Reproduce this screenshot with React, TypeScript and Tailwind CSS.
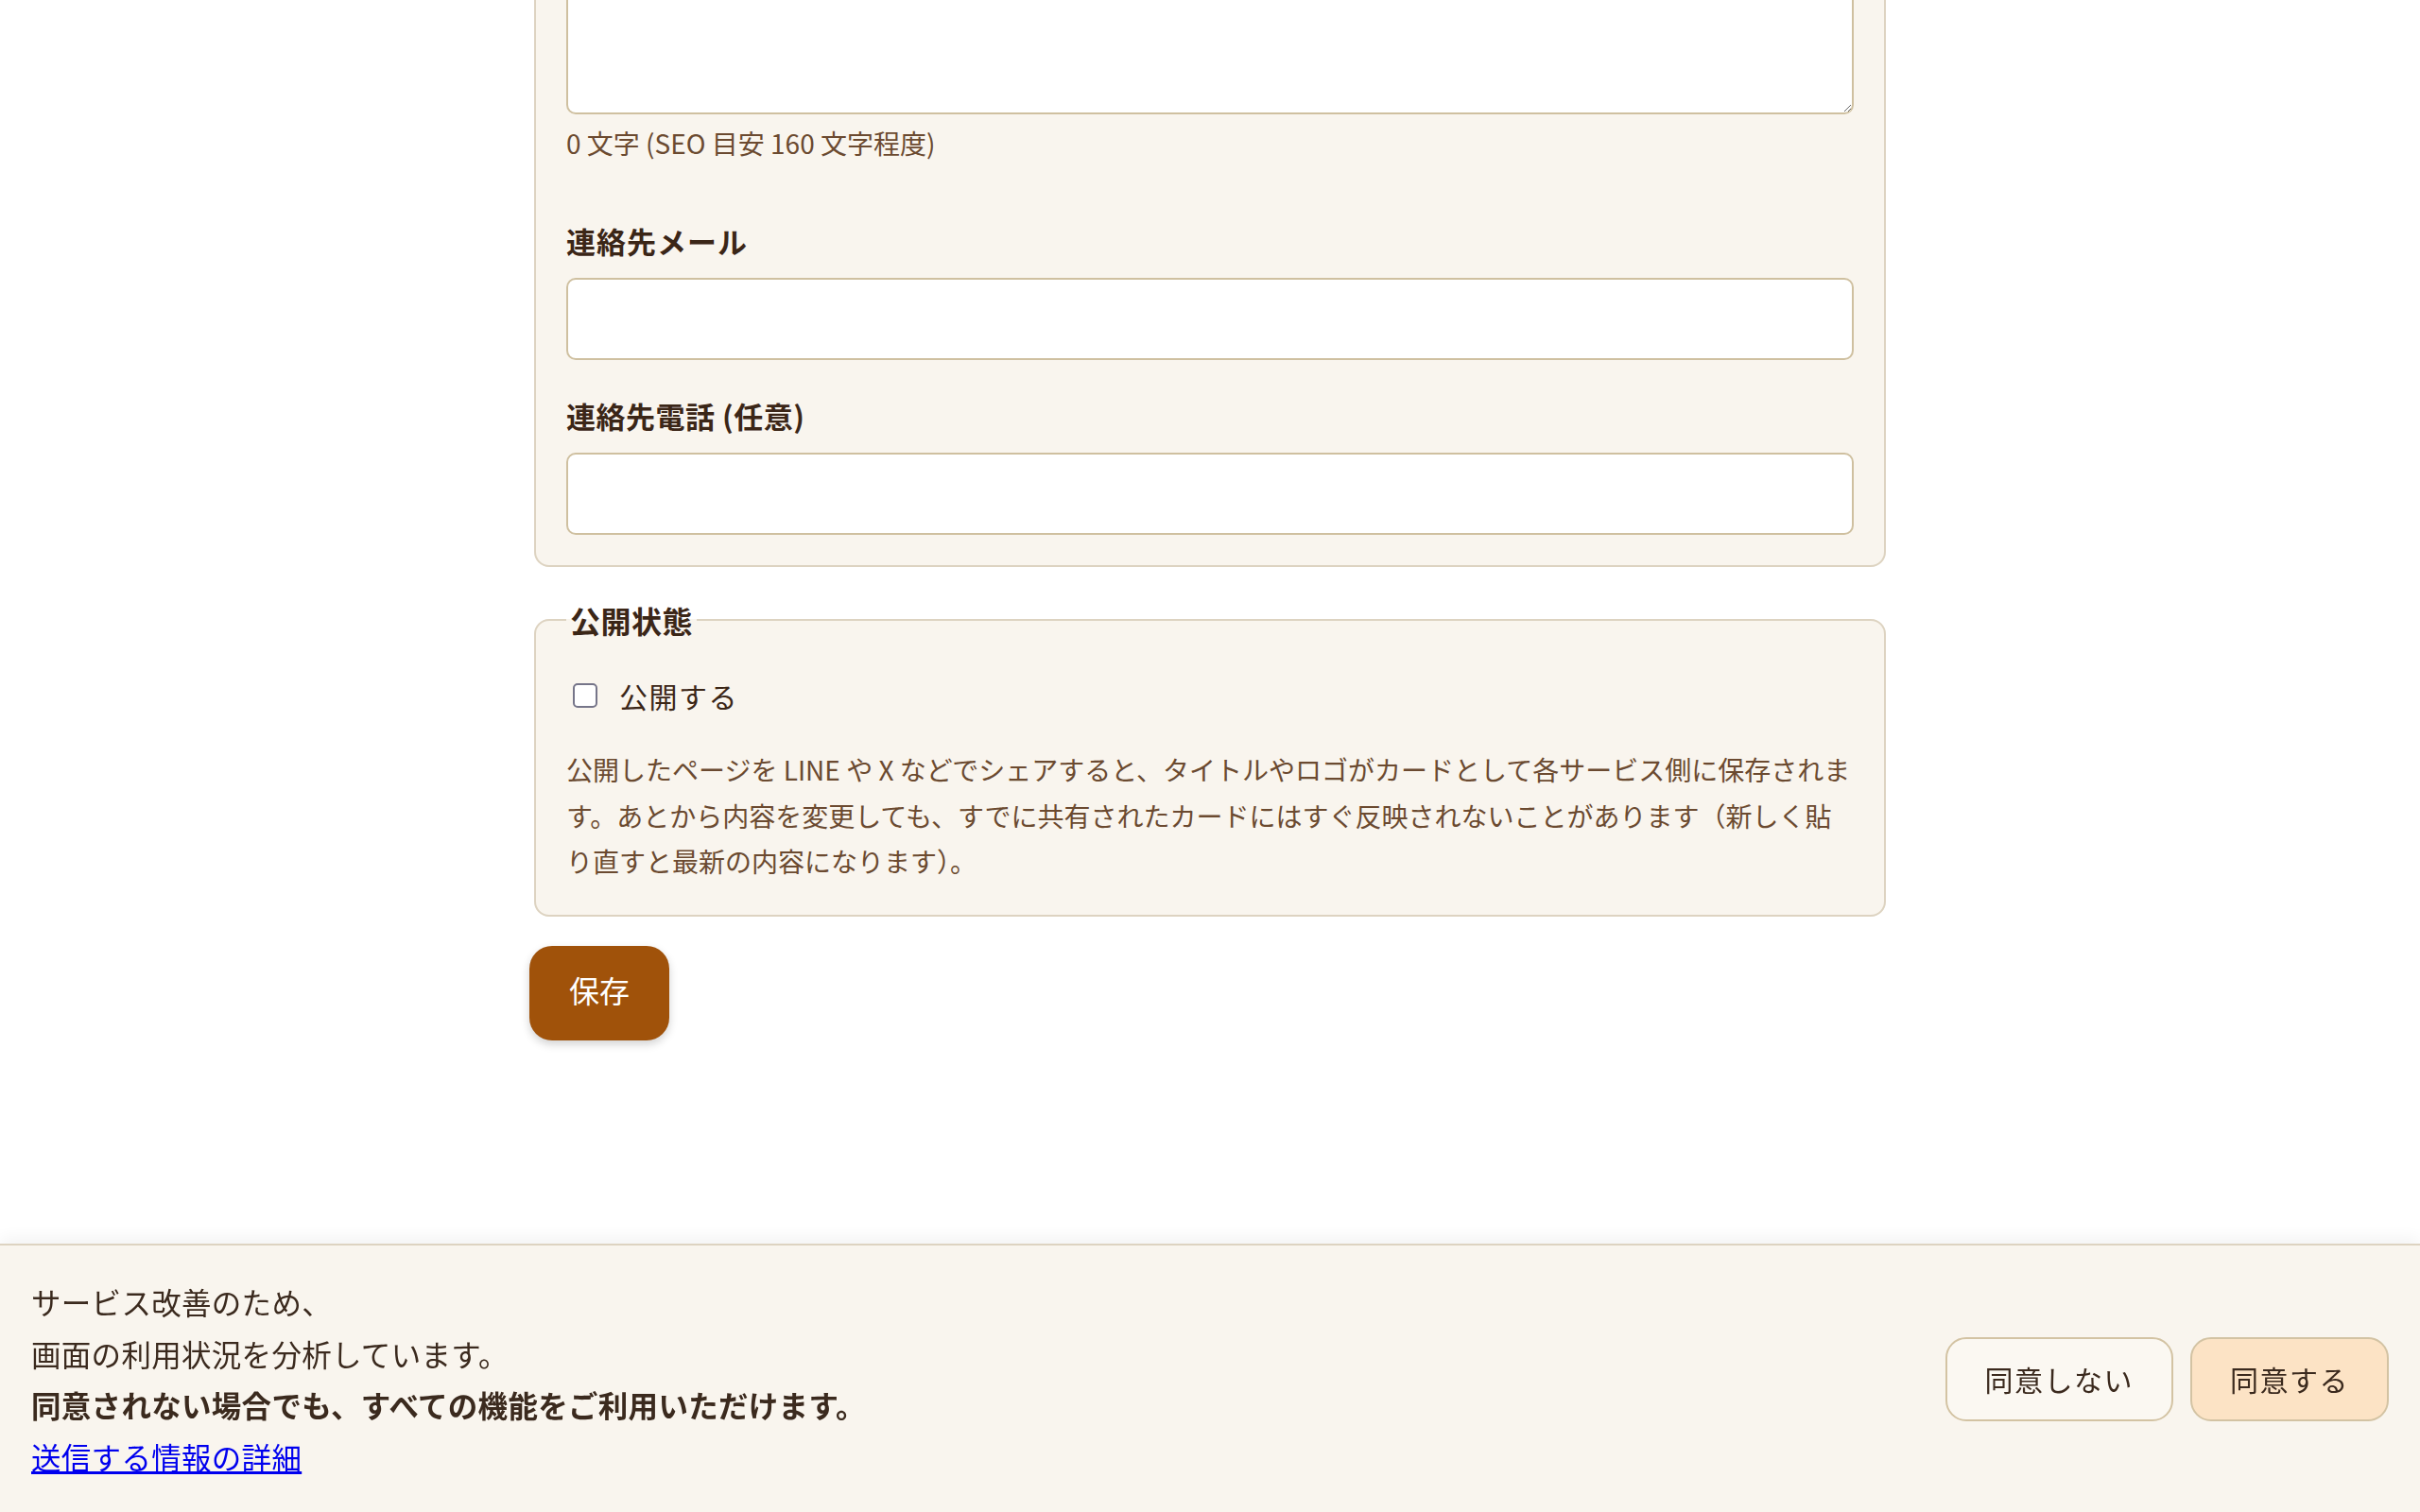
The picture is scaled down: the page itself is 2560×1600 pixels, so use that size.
export default function App() {
  return (
    <div className="min-h-screen bg-white font-['Noto_Sans_CJK_JP','Noto_Sans_CJK_SC',sans-serif] text-[#3b2617]">
      <div className="w-[1440px] mx-auto -mt-[151px] pb-[420px]">
        <fieldset className="mx-[5px] border-2 border-[#ddd3c1] rounded-[16px] bg-[#f9f5ee] px-[32px] pt-[32px] pb-[32px]">
          <label className="block text-[31px] leading-[46px] font-semibold tracking-[1px] mb-[14px]">紹介文</label>
          <textarea
            className="block w-full h-[178px] border-2 border-[#cfc0a0] rounded-[10px] bg-white px-[20px] py-[16px] text-[26px] leading-[40px] text-[#3b2617] placeholder:text-[#b3aba3] outline-none"
            placeholder="例：地域の子育て家庭を応援する活動をしています。"
          />
          <p className="mt-[9px] text-[28px] leading-[42px] text-[#6b4a30]">0 文字 (SEO 目安 160 文字程度)</p>
          <label className="block mt-[60px] mb-[16px] text-[31px] leading-[46px] font-semibold tracking-[1px]">連絡先メール</label>
          <input type="email" className="block w-full h-[87px] border-2 border-[#cfc0a0] rounded-[10px] bg-white px-[20px] text-[26px] outline-none" />
          <label className="block mt-[36px] mb-[16px] text-[31px] leading-[46px] font-semibold tracking-[0.5px]">連絡先電話 (任意)</label>
          <input type="tel" className="block w-full h-[87px] border-2 border-[#cfc0a0] rounded-[10px] bg-white px-[20px] text-[26px] outline-none" />
        </fieldset>

        <fieldset className="mt-[32px] mx-[5px] border-2 border-[#ddd3c1] rounded-[16px] bg-[#f9f5ee] px-[32px] pt-[32px] pb-[32px]">
          <legend className="px-[4px] text-[32px] leading-[48px] font-bold tracking-[0.5px]">公開状態</legend>
          <label className="flex items-center h-[48px]">
            <input type="checkbox" className="appearance-none w-[26px] h-[26px] border-2 border-[#767589] rounded-[5px] bg-white ml-[7px] mr-[23px]" />
            <span className="text-[30px] leading-[48px] tracking-[1.5px]">公開する</span>
          </label>
          <p className="mt-[30px] text-[28px] leading-[48.5px] text-[#6b4a30]">
            公開したページを LINE や X などでシェアすると、タイトルやロゴがカードとして各サービス側に保存されます。あとから内容を変更しても、すでに共有されたカードにはすぐ反映されないことがあります（新しく貼り直すと最新の内容になります）。
          </p>
        </fieldset>

        <button className="mt-[31px] h-[100px] px-[42px] pb-[8px] rounded-[24px] bg-[#a0520a] text-white text-[32px] leading-[48px] shadow-[0_4px_10px_rgba(0,0,0,0.18)]">
          保存
        </button>
      </div>

      <div className="fixed bottom-0 inset-x-0 border-t-2 border-[#ddd3c1] bg-[#f9f5ee] shadow-[0_-6px_16px_rgba(0,0,0,0.05)] pl-[33px] pr-[33px] py-[32px] flex items-center justify-between text-[#3b2a1e]">
        <div className="text-[31.5px] leading-[54.5px] tracking-[0.3px]">
          <p>サービス改善のため、</p>
          <p>画面の利用状況を分析しています。</p>
          <p className="font-bold">同意されない場合でも、すべての機能をご利用いただけます。</p>
          <p>
            <a href="#" className="text-[#0000ee] underline">送信する情報の詳細</a>
          </p>
        </div>
        <div className="flex items-center gap-[18px]">
          <button className="h-[89px] px-[40px] rounded-[22px] border-2 border-[#d3c3a3] bg-[#fbf8f2] text-[30px] tracking-[1.5px] text-[#3b2a1e]">
            同意しない
          </button>
          <button className="h-[89px] px-[40px] rounded-[22px] border-2 border-[#d3c3a3] bg-[#fce3c5] text-[30px] tracking-[1.5px] text-[#3b2a1e]">
            同意する
          </button>
        </div>
      </div>
    </div>
  );
}
